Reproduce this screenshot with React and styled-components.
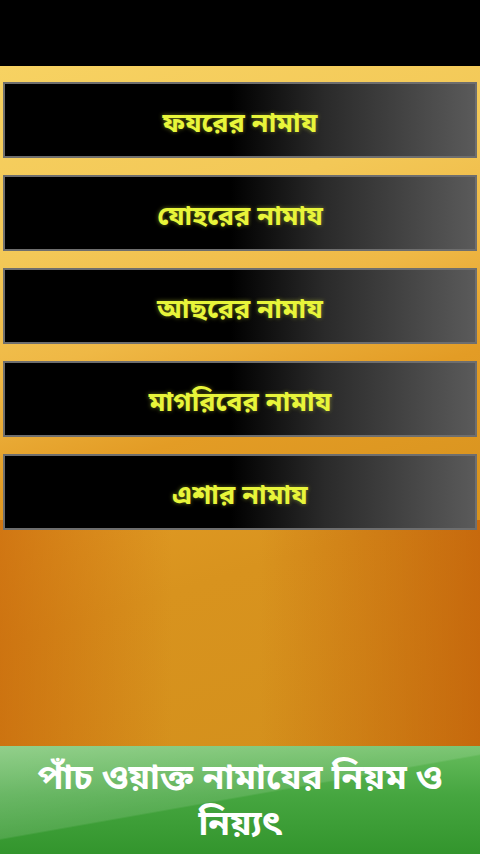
import React from 'react'
import styled, { createGlobalStyle } from 'styled-components'

const Global = createGlobalStyle`
        html, body {
                margin: 0;
                padding: 0;
                background: #000;
        }

        body {
                font-family: "Noto Sans", "Noto Sans Bengali", "Lohit Bengali", sans-serif;
        }
`

const Screen = styled.div`
        width: 480px;
        height: 854px;
        display: flex;
        flex-direction: column;
        background: #000;
        overflow: hidden;
`

const TopBar = styled.div`
        height: 66px;
        flex: none;
        background: #000;
`

const Board = styled.div`
        flex: 1;
        display: flex;
        flex-direction: column;
        gap: 17px;
        padding: 16px 3px 0;
        background:
                linear-gradient(90deg, rgba(198, 95, 8, 0.6) 0%, rgba(198, 95, 8, 0) 36%, rgba(198, 95, 8, 0) 54%, rgba(192, 88, 6, 0.7) 100%) left bottom / 100% 226px no-repeat,
                linear-gradient(163deg, #f7d262 0%, #f3c857 24%, #efb845 38%, #e39c25 52%, #d8931e 70%, #d3901c 100%);
`

const PrayerButton = styled.button`
        height: 76px;
        flex: none;
        display: flex;
        align-items: center;
        justify-content: center;
        border: 2px solid #6e6e6e;
        background: linear-gradient(90deg, #000 0%, #000 48%, #2a2a2a 68%, #5a5a5a 100%);
        color: #e8f53a;
        font-family: "Noto Sans", "Noto Sans Bengali", sans-serif;
        font-weight: 700;
        font-size: 27px;
        text-shadow: 0 0 4px rgba(230, 245, 60, 0.45);
        cursor: pointer;
        padding: 5px 0 0;
`

const Banner = styled.div`
        height: 108px;
        flex: none;
        display: flex;
        align-items: center;
        justify-content: center;
        text-align: center;
        padding: 0 14px 2px;
        box-sizing: border-box;
        background:
                linear-gradient(170deg, rgba(255, 255, 255, 0.28) 0%, rgba(255, 255, 255, 0.12) 48%, rgba(255, 255, 255, 0) 49%),
                linear-gradient(180deg, #68bd5e 0%, #46a640 45%, #33952d 100%);
        color: #fff;
        font-weight: 700;
        font-size: 35px;
        line-height: 46px;
`

const prayers = [
        'ফযরের নামায',
        'যোহরের নামায',
        'আছরের নামায',
        'মাগরিবের নামায',
        'এশার নামায',
]

const App = () => {

        return (
                <>
                        <Global />
                        <Screen>
                                <TopBar />
                                <Board>
                                        {
                                                prayers.map( p => <PrayerButton key={p}>{p}</PrayerButton> )
                                        }
                                </Board>
                                <Banner>পাঁচ ওয়াক্ত নামাযের নিয়ম ও নিয়্যৎ</Banner>
                        </Screen>
                </>
        )
}

export default App
